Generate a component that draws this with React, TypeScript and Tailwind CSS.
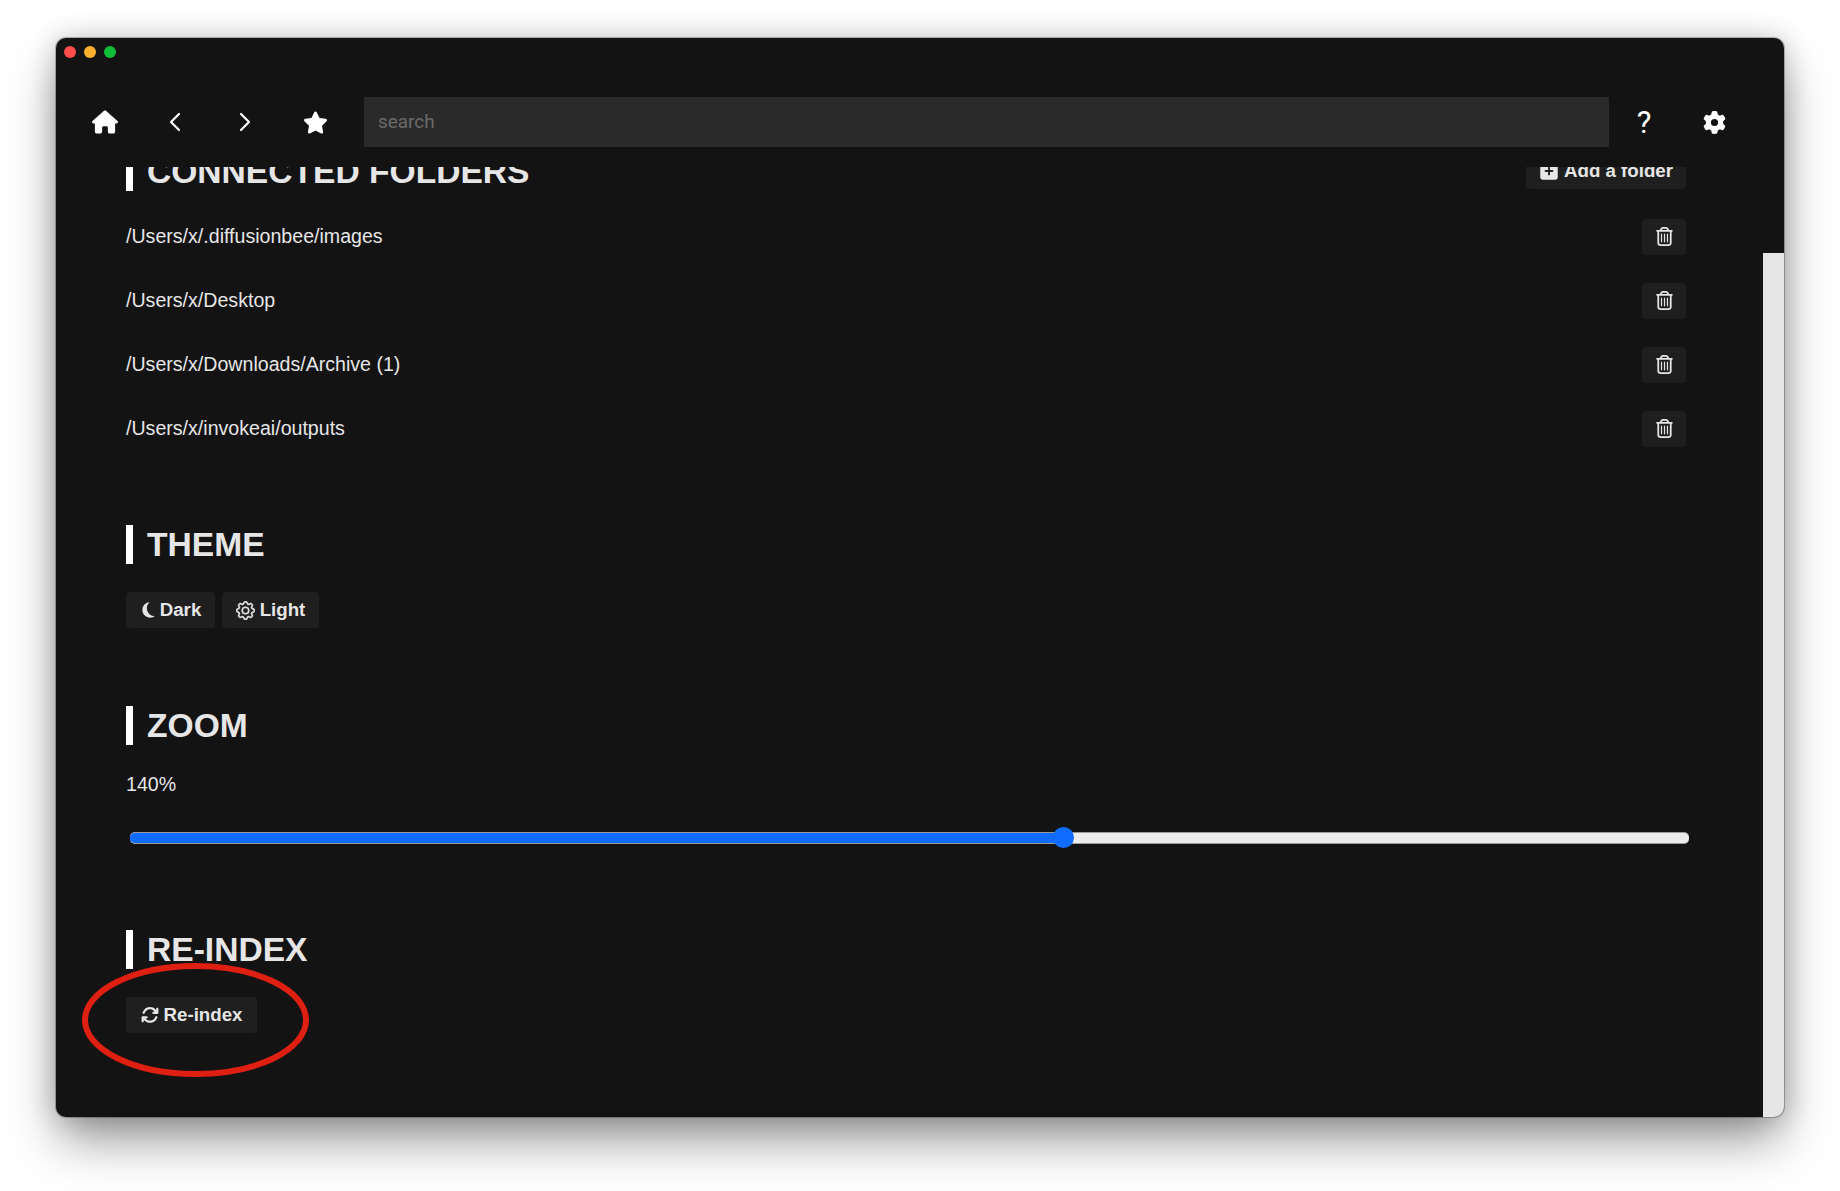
import { FaRegTrashCan, FaHouse, FaStar, FaGear, FaArrowsRotate, FaSquarePlus } from "react-icons/fa6";
import { FiChevronLeft, FiChevronRight } from "react-icons/fi";
import { BsGear } from "react-icons/bs";
import type { ReactNode } from "react";

const folders = [
  "/Users/x/.diffusionbee/images",
  "/Users/x/Desktop",
  "/Users/x/Downloads/Archive (1)",
  "/Users/x/invokeai/outputs",
];

function Heading({ children }: { children: ReactNode }) {
  return (
    <h2 className="h-[39px] border-l-[7px] border-white pl-[14px] text-[33.6px] font-bold leading-[39px] text-[#e6e6e6]">
      {children}
    </h2>
  );
}

function Button({ children, className = "" }: { children: ReactNode; className?: string }) {
  return (
    <button className={`flex h-9 items-center justify-center gap-[5px] whitespace-nowrap rounded-[4px] bg-[#1f1f1f] text-[18.7px] font-bold text-[#e6e6e6] ${className}`}>
      {children}
    </button>
  );
}

function Crescent() {
  return (
    <svg width="15" height="16" viewBox="0 0 15 16" fill="currentColor">
      <path d="M9.5 .3A7.7 7.7 0 1 0 14.6 14.2A8 8 0 0 1 9.5 .3Z" />
    </svg>
  );
}

export default function App() {
  return (
    <div className="h-[1191px] w-[1840px] overflow-hidden bg-white pl-[56px] pt-[38px] font-['Liberation_Sans',sans-serif]">
      <div className="flex h-[1079px] w-[1728px] flex-col overflow-hidden rounded-[10px] bg-[#131313] shadow-[0_0_0_1px_rgba(0,0,0,0.25),0_26px_50px_-4px_rgba(0,0,0,0.42),0_0_28px_rgba(0,0,0,0.2)]">
        {/* Title bar */}
        <div className="flex h-[59px] shrink-0 gap-2 pl-2 pt-2">
          <span className="h-3 w-3 rounded-full bg-[#fe4b4b]" />
          <span className="h-3 w-3 rounded-full bg-[#fdb02d]" />
          <span className="h-3 w-3 rounded-full bg-[#12bd3a]" />
        </div>

        {/* Toolbar */}
        <div className="flex h-[50px] shrink-0 items-center pl-[14px] text-white">
          <div className="flex w-[70px] justify-center"><FaHouse size={26} /></div>
          <div className="flex w-[70px] justify-center"><FiChevronLeft size={32} strokeWidth={1.6} /></div>
          <div className="flex w-[70px] justify-center"><FiChevronRight size={32} strokeWidth={1.6} /></div>
          <div className="flex w-[70px] justify-center"><FaStar size={25} /></div>
          <input
            placeholder="search"
            className="ml-[14px] h-full w-[1245px] bg-[#2a2a2a] px-[14px] pb-0.5 font-['Roboto',sans-serif] text-[18.9px] text-white outline-none placeholder:text-[#6a6a6a]"
          />
          <div className="flex w-[70px] justify-center font-['Roboto',sans-serif] text-[31px] leading-none">?</div>
          <div className="flex w-[70px] justify-center"><FaGear size={23} /></div>
        </div>

        {/* Scrolled settings */}
        <div className="mt-5 flex min-h-0 flex-1">
          <div className="min-w-0 flex-1 overflow-hidden pl-[70px] pr-[77px]">
            <div className="-mt-[15px]">
              <section>
                <div className="flex items-start justify-between">
                  <Heading>CONNECTED FOLDERS</Heading>
                  <Button className="mt-px w-[160px]"><FaSquarePlus size={20} /> Add a folder</Button>
                </div>
                <div className="mt-[14px]">
                  {folders.map((path) => (
                    <div key={path} className="flex h-16 items-center justify-between text-[19.6px] text-[#e6e6e6]">
                      <span>{path}</span>
                      <Button className="w-11 pb-0.5"><FaRegTrashCan size={19} /></Button>
                    </div>
                  ))}
                </div>
              </section>

              <section className="mt-16">
                <Heading>THEME</Heading>
                <div className="mt-7 flex gap-[7px]">
                  <Button className="w-[89px]"><Crescent /> Dark</Button>
                  <Button className="w-[97px]"><BsGear size={19} stroke="currentColor" strokeWidth={0.5} /> Light</Button>
                </div>
              </section>

              <section className="mt-[78px]">
                <Heading>ZOOM</Heading>
                <p className="mt-[28px] text-[19.6px] leading-[22px] text-[#e6e6e6]">140%</p>
                <div className="relative -mr-[3px] ml-1 mt-[37px] flex h-[12px] overflow-hidden rounded-[5px] border-y border-[#9a9a9a] bg-[#ececec]">
                  <div className="w-[933px] bg-[#0f6cff]" />
                </div>
                <div className="relative ml-1 h-0 w-0">
                  <span className="absolute left-[923px] top-[-17px] h-[21px] w-[21px] rounded-full bg-[#0f6cff]" />
                </div>
              </section>

              <section className="relative mt-[86px]">
                <Heading>RE-INDEX</Heading>
                <div className="mt-7">
                  <Button className="w-[131px]"><FaArrowsRotate size={18} /> Re-index</Button>
                </div>
                <svg className="absolute -left-[44px] top-[33px]" width="227" height="114" viewBox="0 0 227 114" fill="none">
                  <ellipse cx="113.5" cy="57" rx="110.5" ry="54" stroke="#e01f13" strokeWidth="6" />
                </svg>
              </section>
            </div>
          </div>

          {/* Scrollbar */}
          <div className="mt-[86px] w-[21px] shrink-0 bg-[#e6e6e6]" />
        </div>
      </div>
    </div>
  );
}
